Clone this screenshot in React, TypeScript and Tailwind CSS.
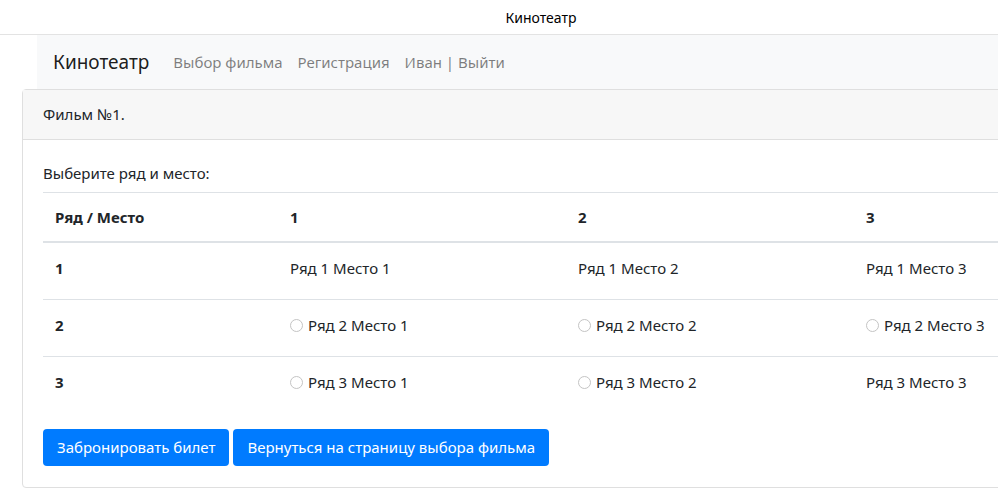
import React from 'react'

const font = "font-['Segoe_UI','Noto_Sans','Open_Sans',sans-serif]"

const cols = ['w-[235px]', 'w-[288px]', 'w-[288px]', 'w-[288px]']

type Seat = { row: number; place: number; free: boolean }

const rows: Seat[][] = [
  [
    { row: 1, place: 1, free: false },
    { row: 1, place: 2, free: false },
    { row: 1, place: 3, free: false },
  ],
  [
    { row: 2, place: 1, free: true },
    { row: 2, place: 2, free: true },
    { row: 2, place: 3, free: true },
  ],
  [
    { row: 3, place: 1, free: true },
    { row: 3, place: 2, free: true },
    { row: 3, place: 3, free: false },
  ],
]

function SeatCell({ seat }: { seat: Seat }) {
  return (
    <div className="w-[288px] shrink-0 px-3 flex items-center">
      {seat.free && (
        <span className="w-[13px] h-[13px] rounded-full border border-[#c4c4c4] bg-white mr-[5px] shrink-0" />
      )}
      <span>
        Ряд {seat.row} Место {seat.place}
      </span>
    </div>
  )
}

export default function App() {
  return (
    <div className={`w-[998px] h-[496px] overflow-hidden bg-white text-[#212529] ${font}`}>
      <div className="h-[35px] border-b border-[#e3e3e3] flex items-center justify-center pl-[84px] text-[14px] text-black">
        Кинотеатр
      </div>

      <nav className="ml-[37px] h-[54px] bg-[#f8f9fa] flex items-center pl-4 text-[15px]">
        <span className="text-[19px] text-black/90 mr-[24px]">Кинотеатр</span>
        <a className="text-black/50 mr-[15px]">Выбор фильма</a>
        <a className="text-black/50 mr-[15px]">Регистрация</a>
        <a className="text-black/50">Иван | Выйти</a>
      </nav>

      <div className="ml-[22px] w-[1100px] border border-[#dfdfdf] rounded-[4px] text-[15px]">
        <div className="h-[50px] bg-[#f7f7f7] border-b border-[#dfdfdf] flex items-center px-5">
          Фильм №1.
        </div>
        <div className="px-5 pt-[22px] pb-[21px]">
          <p className="mb-[8px] leading-[22px]">Выберите ряд и место:</p>
          <div className="w-[1100px]">
            <div className="flex h-[49px] border-t border-[#dee2e6] font-bold items-center">
              <div className={`${cols[0]} shrink-0 px-3`}>Ряд / Место</div>
              <div className={`${cols[1]} shrink-0 px-3`}>1</div>
              <div className={`${cols[2]} shrink-0 px-3`}>2</div>
              <div className={`${cols[3]} shrink-0 px-3`}>3</div>
            </div>
            {rows.map((r, i) => (
              <div
                key={i}
                className={`flex items-center pb-[5px] ${i === 0 ? 'h-[58px] border-t-2' : 'h-[57px] border-t'} border-[#dee2e6]`}
              >
                <div className={`${cols[0]} shrink-0 px-3 font-bold`}>{i + 1}</div>
                {r.map((s) => (
                  <SeatCell key={s.place} seat={s} />
                ))}
              </div>
            ))}
          </div>
          <div className="flex gap-[4px] mt-[16px]">
            <button
              type="button"
              className="h-[37px] px-[14px] rounded-[4px] bg-[#007bff] text-white"
            >
              Забронировать билет
            </button>
            <button
              type="button"
              className="h-[37px] px-[14px] rounded-[4px] bg-[#007bff] text-white"
            >
              Вернуться на страницу выбора фильма
            </button>
          </div>
        </div>
      </div>
    </div>
  )
}
